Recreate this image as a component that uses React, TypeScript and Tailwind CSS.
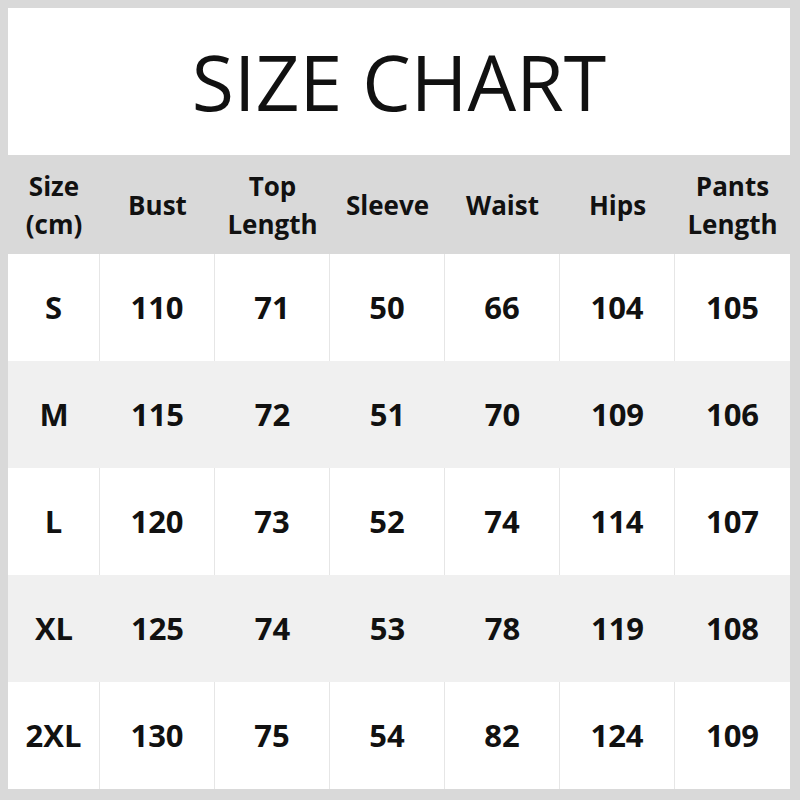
const HEADERS: string[][] = [
  ["Size", "(cm)"],
  ["Bust"],
  ["Top", "Length"],
  ["Sleeve"],
  ["Waist"],
  ["Hips"],
  ["Pants", "Length"],
];

const ROWS: string[][] = [
  ["S", "110", "71", "50", "66", "104", "105"],
  ["M", "115", "72", "51", "70", "109", "106"],
  ["L", "120", "73", "52", "74", "114", "107"],
  ["XL", "125", "74", "53", "78", "119", "108"],
  ["2XL", "130", "75", "54", "82", "124", "109"],
];

const COLS = "grid grid-cols-[92px_repeat(6,115px)]";

export default function App() {
  return (
    <div
      className="w-[800px] h-[800px] bg-[#d9d9d9] pt-[8px] pl-[8px] text-[#111]"
      style={{ fontFamily: '"Open Sans", "Liberation Sans", sans-serif' }}
    >
      <div className="w-[782px] h-[781px] flex flex-col bg-white">
        <div className="h-[147px] flex items-center justify-center">
          <h1 className="text-[77px] font-normal leading-none mt-[-1px]">
            SIZE CHART
          </h1>
        </div>

        <div className={`${COLS} h-[99px] bg-[#d9d9d9]`}>
          {HEADERS.map((h, i) => (
            <div
              key={i}
              className="flex flex-col items-center justify-center text-[26px] font-bold leading-[38px]"
            >
              {h.map((line) => (
                <span key={line}>{line}</span>
              ))}
            </div>
          ))}
        </div>

        {ROWS.map((row, r) => {
          const striped = r % 2 === 1;
          return (
            <div
              key={row[0]}
              className={`${COLS} h-[107px] ${striped ? "bg-[#f0f0f0]" : "bg-white"}`}
            >
              {row.map((cell, c) => (
                <div
                  key={c}
                  className={`flex items-center justify-center text-[31px] font-bold ${
                    !striped && c < 6 ? "border-r border-[#e6e6e6]" : ""
                  }`}
                >
                  {cell}
                </div>
              ))}
            </div>
          );
        })}
      </div>
    </div>
  );
}
